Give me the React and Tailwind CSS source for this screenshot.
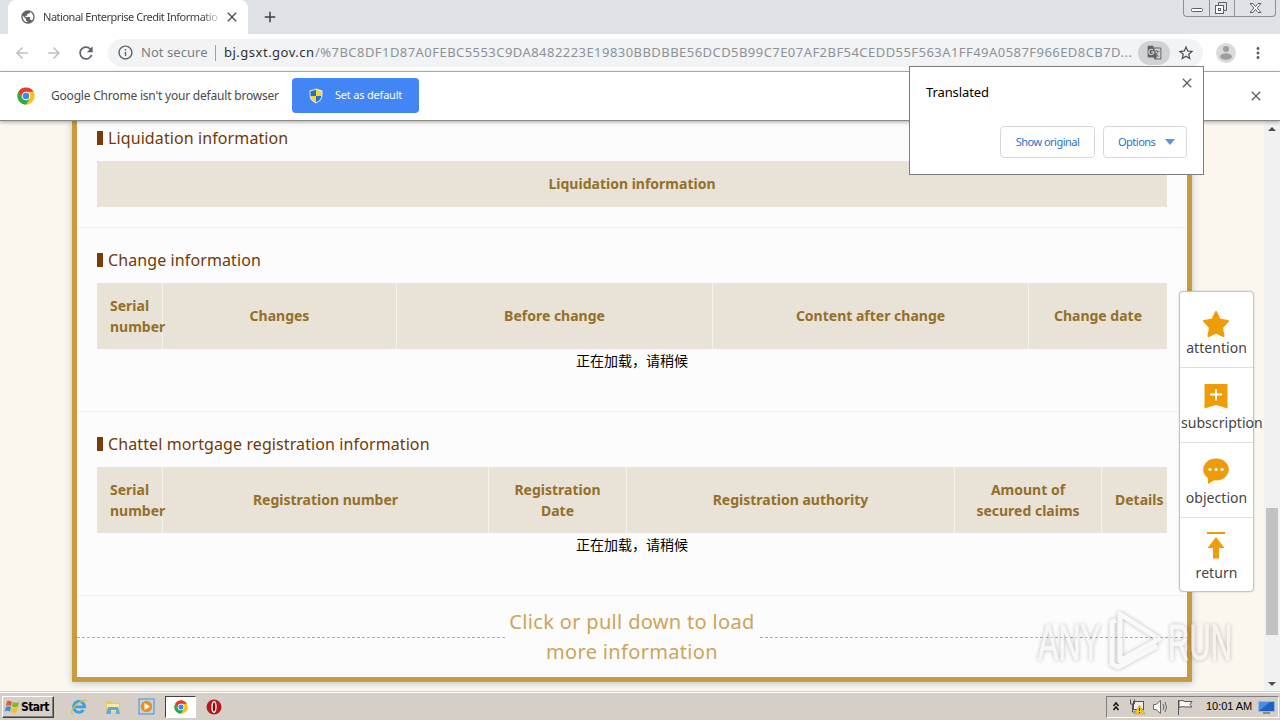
import React from 'react'
import { MdAdd, MdArrowBack, MdArrowForward, MdClose, MdGTranslate, MdInfoOutline, MdMoreVert, MdPublic, MdRefresh, MdStarBorder } from 'react-icons/md'

const changeColumns = [
    { label: 'Serial number', width: 'w-[66px]' },
    { label: 'Changes', width: 'w-[234px]' },
    { label: 'Before change', width: 'w-[316px]' },
    { label: 'Content after change', width: 'w-[316px]' },
    { label: 'Change date', width: 'w-[138px]' },
]

const mortgageColumns = [
    { label: 'Serial number', width: 'w-[66px]' },
    { label: 'Registration number', width: 'w-[326px]' },
    { label: 'Registration Date', width: 'w-[138px]' },
    { label: 'Registration authority', width: 'w-[328px]' },
    { label: 'Amount of secured claims', width: 'w-[147px]' },
    { label: 'Details', width: 'w-[65px]' },
]

const ChromeLogo = ({ className }) => (
    <svg viewBox="0 0 48 48" className={className}>
        <circle cx="24" cy="24" r="23" fill="#fbc116" />
        <path d="M24 12.5 H43.9 A23 23 0 0 0 4.1 12.5 L14 29.7 Z" fill="#e33b2e" />
        <path d="M4.1 12.5 A23 23 0 0 0 24 47 L34 29.7 L24 34 L14 29.7 Z" fill="#2da94f" />
        <circle cx="24" cy="24" r="11.5" fill="#fff" />
        <circle cx="24" cy="24" r="8.8" fill="#4285f4" />
    </svg>
)

const ShieldIcon = () => (
    <svg viewBox="0 0 16 16" className="w-4 h-4 shrink-0">
        <path d="M8 .5 L14.5 2.5 V7 Q14.5 12.5 8 15.5 Q1.5 12.5 1.5 7 V2.5 Z" fill="#dce9f7" />
        <path d="M8 1.7 V8 H2.5 V3.3 Z" fill="#2d6fc4" />
        <path d="M8 1.7 V8 H13.5 V3.3 Z" fill="#f9d432" />
        <path d="M8 8 H2.6 Q3 12 8 14.4 Z" fill="#f9d432" />
        <path d="M8 8 H13.4 Q13 12 8 14.4 Z" fill="#2d6fc4" />
    </svg>
)

const TabStrip = () => (
    <div className="relative flex h-[34px] bg-[#dee1e6] pl-2">
        <div className="flex items-center w-[240px] h-full bg-white rounded-t-lg pl-3">
            <MdPublic className="w-4 h-4 text-[#5f6368] shrink-0" />
            <span className="w-[177px] ml-[7px] overflow-hidden whitespace-nowrap text-[11px] tracking-[-0.48px] text-[#3c4043] [mask-image:linear-gradient(to_right,black_158px,transparent_180px)]">National Enterprise Credit Informatio</span>
            <MdClose className="w-4 h-4 ml-[4px] text-[#4b4e52] shrink-0" />
        </div>
        <MdAdd className="w-[18px] h-[18px] mt-2 ml-[13px] text-[#3c4043]" />
        <div className="absolute right-[4px] top-0 flex h-[17px] w-[93px] rounded-b border border-t-0 border-[#8d9096] text-[#5c6066]">
            <svg viewBox="0 0 91 16" className="w-[91px] h-4" fill="none" stroke="currentColor">
                <path d="M25.5 0 V16 M50.5 0 V16" stroke="#8d9096" />
                <rect x="7.5" y="8.5" width="11" height="3" rx="1" fill="#fff" />
                <path d="M34.5 2.5 H42.5 V10.5 H40 M34.5 2.5 V5" />
                <rect x="31.5" y="5.5" width="8" height="8" fill="#fff" />
                <rect x="34.5" y="8.5" width="2" height="2" />
                <path d="M66 3.5 h3 l2.5 3 l2.5 -3 h3 l-4 4.5 l4 4.5 h-3 l-2.5 -3 l-2.5 3 h-3 l4 -4.5 Z" fill="#fff" />
            </svg>
        </div>
    </div>
)

const Toolbar = () => (
    <div className="flex items-center h-[38px] bg-white border-b border-[#b6b4b6] pl-[13px]">
        <MdArrowBack className="w-[18px] h-[18px] text-[#bdbfc1]" />
        <MdArrowForward className="w-[18px] h-[18px] ml-[14px] text-[#bdbfc1]" />
        <MdRefresh className="w-[20px] h-[20px] ml-[13px] text-[#5f6368]" />
        <div className="flex items-center w-[1095px] h-7 ml-[12px] rounded-full bg-[#f1f3f4] pl-[9px] text-[13px] whitespace-nowrap">
            <MdInfoOutline className="w-[17px] h-[17px] text-[#5f6368]" />
            <span className="w-[67px] ml-[7px] text-[#7a7e83] tracking-[0.05px]">Not secure</span>
            <span className="w-px h-4 ml-[7px] bg-[#9aa0a6]" />
            <span className="w-[91px] ml-2 text-[#303134] tracking-[0.5px]">bj.gsxt.gov.cn</span>
            <span className="w-[819px] text-[#8d9297] tracking-[0.45px]">/%7BC8DF1D87A0FEBC5553C9DA8482223E19830BBDBBE56DCD5B99C7E07AF2BF54CEDD55F563A1FF49A0587F966ED8CB7D...</span>
            <span className="flex items-center justify-center w-8 h-6 ml-1 rounded-full bg-[#d0d2d4]">
                <MdGTranslate className="w-[15px] h-[15px] text-[#5f6368]" />
            </span>
            <MdStarBorder className="w-[18px] h-[18px] ml-[7px] text-[#4b4e52]" />
        </div>
        <svg viewBox="0 0 20 20" className="w-5 h-5 ml-[13px]">
            <circle cx="10" cy="10" r="10" fill="#dadada" />
            <circle cx="10" cy="6" r="3" fill="#9e9e9e" />
            <ellipse cx="10" cy="13.5" rx="6" ry="3.2" fill="#9e9e9e" />
        </svg>
        <MdMoreVert className="w-[18px] h-[18px] ml-[13px] text-[#5f6368]" />
    </div>
)

const DefaultBrowserBar = () => (
    <div className="relative z-10 flex items-center h-[49px] bg-white border-b border-[#8c8a88] pb-px pl-[17px] shadow-[0_1px_4px_rgba(0,0,0,0.35)]">
        <ChromeLogo className="w-[18px] h-[18px]" />
        <span className="w-[230px] ml-4 whitespace-nowrap text-[12px] text-[#4a4a4a] tracking-[-0.2px]">Google Chrome isn't your default browser</span>
        <button className="flex items-center w-[127px] h-[35px] ml-[11px] rounded bg-[#4285f4] pl-4 text-[11px] text-white whitespace-nowrap">
            <ShieldIcon />
            <span className="ml-[11px] tracking-[-0.2px]">Set as default</span>
        </button>
        <MdClose className="w-4 h-4 ml-auto mr-4 text-[#5f6368]" />
    </div>
)

const TranslateBubble = () => (
    <div className="absolute z-20 left-[909px] top-[66px] w-[295px] h-[109px] bg-white border border-[#7d7d7d] flex flex-col">
        <div className="flex justify-between pl-4 pr-2 pt-2">
            <span className="mt-[7px] text-[13px] leading-5 text-black tracking-[-0.1px]">Translated</span>
            <MdClose className="w-4 h-4 text-[#5f6368]" />
        </div>
        <div className="flex justify-end gap-2 mt-6 pr-4 text-[11px] text-[#2a6fd0] whitespace-nowrap">
            <button className="w-[95px] h-8 rounded border border-[#d6d8dc] tracking-[-0.5px]">Show original</button>
            <button className="flex items-center w-[84px] h-8 rounded border border-[#d6d8dc] pl-[14px] tracking-[-0.5px]">
                Options
                <svg viewBox="0 0 10 6" className="w-[10px] h-[6px] ml-auto mr-[11px]"><path d="M0 0 H10 L5 6 Z" fill="#5b94e3" /></svg>
            </button>
        </div>
    </div>
)

const SectionTitle = ({ children }) => (
    <div className="flex items-center h-6 mb-[11px] whitespace-nowrap">
        <span className="w-[6px] h-[14px] mr-[5px] bg-[#7a3c02]" />
        <h2 className="text-[16px] leading-6 text-[#6f3a06] tracking-[0.1px]">{children}</h2>
    </div>
)

const HeaderTable = ({ columns }) => (
    <div className="flex h-[66px] bg-[#e9e2d6]">
        {columns.map((col, i) => (
            <div key={i} className={`${col.width} flex flex-col justify-center shrink-0 px-[13px] pb-px border-r last:border-r-0 border-[#f6f2ea] text-center text-[14px] leading-[21px] font-bold text-[#93702a]`}>
                {col.label}
            </div>
        ))}
    </div>
)

const LoadingSection = ({ title, columns }) => (
    <section className="h-[184px] px-5 pt-5 border-b border-[#f0f0f0]">
        <SectionTitle>{title}</SectionTitle>
        <HeaderTable columns={columns} />
        <p className="h-6 text-center text-[14px] leading-[22px] text-black font-['Noto_Sans_CJK_SC',sans-serif]">正在加载，请稍候</p>
    </section>
)

const DashedLine = () => (
    <div className="flex-1 h-px mt-[30px] bg-[repeating-linear-gradient(to_right,#d6a659_0_3px,transparent_3px_5px)]" />
)

const SideItem = ({ label, children }) => (
    <div className="flex flex-col items-center h-[75px] pt-[17px] border-t border-[#dedede] first:border-t-0 first:pt-[18px]">
        <svg viewBox="0 0 28 28" className="w-7 h-7 mr-px overflow-visible" fill="#f09c08">{children}</svg>
        <span className="max-w-[71px] text-[14px] leading-[20px] text-[#444] tracking-[0.05px]">{label}</span>
    </div>
)

const SideMenu = () => (
    <div className="absolute z-10 left-[1179px] top-[291px] w-[75px] h-[301px] bg-white rounded-sm border border-[#c4c4c4] shadow-[0_0_2px_rgba(0,0,0,0.2)]">
        <SideItem label="attention">
            <path d="M14 2 L17.5 9.5 L26 11 L20 17.5 L21.5 26 L14 22.5 L6.5 26 L8 17.5 L2 11 L10.500 9.5 Z" stroke="#f09c08" strokeWidth="2" strokeLinejoin="round" />
        </SideItem>
        <SideItem label="subscription">
            <path d="M2.5 -1 H25.5 V23.5 L14 20 L2.5 23.5 Z" />
            <path d="M14 4 V15.5 M8 9.500 H20" stroke="#fff" strokeWidth="2" />
        </SideItem>
        <SideItem label="objection">
            <ellipse cx="14" cy="9.5" rx="12.8" ry="11" />
            <path d="M6 16 L6 24 L14 19 Z" />
            <circle cx="8" cy="9.5" r="1.6" fill="#fff" />
            <circle cx="14" cy="9.5" r="1.6" fill="#fff" />
            <circle cx="20" cy="9.5" r="1.6" fill="#fff" />
        </SideItem>
        <SideItem label="return">
            <path d="M5 -3 H23 V-1 H5 Z M14 2 L22.5 13 H17 V23.5 H11 V13 H5.5 Z" />
        </SideItem>
    </div>
)

const Watermark = () => (
    <svg viewBox="0 0 240 66" className="absolute z-20 left-[1035px] top-[608px] w-[240px] h-[66px] drop-shadow-[0_0_2px_rgba(0,0,0,0.45)] opacity-55">
        <g fill="#f4f4f4" fontFamily="'Liberation Sans Narrow', 'Liberation Sans', sans-serif" fontSize="50" stroke="#f4f4f4">
            <text x="3" y="52" textLength="63" lengthAdjust="spacingAndGlyphs">ANY</text>
            <text x="133" y="52" textLength="64" lengthAdjust="spacingAndGlyphs">RUN</text>
        </g>
        <g fill="none" stroke="#f8f8f8" strokeWidth="5" strokeLinejoin="round">
            <path d="M85 6 L124 31 L85 53 Z" />
            <path d="M81 12 L77 14 V56 L83 59 L122 38" />
        </g>
    </svg>
)

const Scrollbar = () => (
    <div className="flex flex-col items-center w-4 h-full bg-[#f1f1f1] py-[6px]">
        <svg viewBox="0 0 8 4" className="w-2 h-1"><path d="M0 4 L4 0 L8 4 Z" fill="#505050" /></svg>
        <div className="w-3 h-[127px] mt-[377px] bg-[#c1c1c1]" />
        <svg viewBox="0 0 8 4" className="w-2 h-1 mt-auto"><path d="M0 0 H8 L4 4 Z" fill="#505050" /></svg>
    </div>
)

const Taskbar = () => (
    <div className="relative flex items-center h-7 bg-[#d5cfc7] border-t border-white shadow-[0_-1px_0_#d5cfc7] pl-[2px]">
        <button className="flex items-center w-[52px] h-[22px] border border-t-white border-l-white border-r-[#404040] border-b-[#404040] shadow-[inset_-1px_-1px_0_#808080] pl-px">
            <svg viewBox="0 0 16 16" className="w-4 h-4 shrink-0">
                <path d="M3 2 Q5 1 8 3 L7 7 Q4 5.5 2 7 Z" fill="#e8572a" />
                <path d="M9 3 Q12 4.5 15 3 L14 7.5 Q11 9 8 7.5 Z" fill="#7cb82f" />
                <path d="M2 8 Q4 6.5 7 8 L6 12.5 Q3 11 0.5 12.5 Z" fill="#3a8fdd" />
                <path d="M8 8.5 Q11 10 14 8.5 L12.5 13 Q10 14.5 7 13 Z" fill="#f8c020" />
            </svg>
            <span className="ml-px font-['DejaVu_Sans_Condensed','DejaVu_Sans',sans-serif] font-bold text-[12px] leading-4 tracking-[-0.6px] text-black">Start</span>
        </button>
        <svg viewBox="0 0 18 18" className="w-[18px] h-[18px] ml-[16px]" fill="none">
            <path d="M13.5 12 A5.5 5.5 0 1 1 14.5 8.8 H5" stroke="#36a2e2" strokeWidth="2.8" />
            <path d="M3.5 15.5 C0 17 1 12 6 7 C11 2.5 17 0 16.5 4" stroke="#e5bd3a" strokeWidth="1.3" />
        </svg>
        <svg viewBox="0 0 18 18" className="w-[18px] h-[18px] ml-[16px]">
            <path d="M2 3 H8 L9 5 H16 V13 H2 Z" fill="#e9c864" />
            <path d="M3 6 H15 V13 H3 Z" fill="#f8e9a6" />
            <path d="M4 9 H14 L16 16 H12 V12 H7 V16 H2 Z" fill="#62a9d5" />
        </svg>
        <svg viewBox="0 0 18 18" className="w-[18px] h-[18px] ml-[16px]">
            <rect x="1" y="1" width="15" height="15" fill="#b8d8f2" stroke="#4d8dc9" />
            <circle cx="8.5" cy="8.5" r="5.7" fill="#f28c16" />
            <path d="M6.5 5 L12 8.5 L6.5 12 Z" fill="#fff" />
        </svg>
        <div className="flex items-center justify-center w-[31px] h-[22px] ml-[9px] bg-white border border-t-[#404040] border-l-[#404040] border-r-white border-b-white">
            <ChromeLogo className="w-[14px] h-[14px]" />
        </div>
        <svg viewBox="0 0 16 16" className="w-4 h-4 ml-[10px]">
            <circle cx="8" cy="8" r="7.5" fill="#b3191d" />
            <ellipse cx="8" cy="8" rx="2" ry="5.3" fill="#8a0a0e" stroke="#fff" strokeWidth="1.3" />
        </svg>
        <div className="flex items-center w-[173px] h-[22px] ml-auto mr-px border border-t-[#808080] border-l-[#808080] border-r-white border-b-white pl-[5px]">
            <svg viewBox="0 0 8 12" className="w-2 h-3" fill="none" stroke="#111" strokeWidth="1.5"><path d="M1.5 5 L4 2 L6.5 5 M1.5 9 L4 6 L6.5 9" /></svg>
            <svg viewBox="0 0 18 18" className="w-[18px] h-[18px] ml-[8px]">
                <rect x="5.5" y="3.5" width="10" height="8" fill="#eee" stroke="#555" />
                <path d="M2.5 1.5 V6 H6.5 V1.5 M4.5 6 V14 H8" fill="none" stroke="#555" />
                <path d="M11.5 7 L17 16 H6 Z" fill="#f6c915" stroke="#c28d0a" strokeWidth=".5" />
                <path d="M11.5 10 V13 M11.5 14 V15" stroke="#222" />
            </svg>
            <svg viewBox="0 0 18 18" className="w-[18px] h-[18px] ml-[6px]" fill="#f7f7f7" stroke="#6b6b6b">
                <path d="M1.5 6.5 H4 L8.5 2.5 V15.5 L4 11.5 H1.5 Z" />
                <path d="M11 6 Q13 9 11 12 M13 4 Q16 9 13 14" fill="none" />
            </svg>
            <svg viewBox="0 0 18 18" className="w-[18px] h-[18px] ml-[6px]" fill="#f7f7f7" stroke="#555">
                <path d="M2.5 2 V17 M3 3 Q6 1.5 9 3.5 H16 L14 6.5 L16 9 H10 Q6 8 3 9.5 Z" />
            </svg>
            <span className="w-[46px] ml-[12px] whitespace-nowrap font-['Liberation_Sans',sans-serif] text-[11px] tracking-[-0.05px] text-black">10:01 AM</span>
            <svg viewBox="0 0 18 14" className="w-[18px] h-[14px] ml-[6px]">
                <rect x=".5" y="1.5" width="16" height="10" fill="#1f62c4" stroke="#8fb8e8" />
                <path d="M1 11 L12 2 H1 Z" fill="#4a8ce0" />
                <path d="M5 13 H12" stroke="#444" />
            </svg>
        </div>
    </div>
)

const App = () => {
    return (
        <div className="relative flex flex-col w-[1280px] h-[720px] overflow-hidden bg-white font-['Noto_Sans','Noto_Sans_CJK_SC',sans-serif]">
            <TabStrip />
            <Toolbar />
            <DefaultBrowserBar />

            {/* Page content */}
            <div className="flex flex-1 min-h-0 bg-[#fbf7ee]">
                <div className="flex-1 pl-[72px]">
                    <main className="w-[1120px] h-[561px] bg-[#fcfcfc] border-[5px] border-t-0 border-[#c89b3c] shadow-[0_1px_7px_#b5c0c6]">
                        <section className="h-[107px] px-5 pt-[5px] border-b border-[#f0f0f0]">
                            <SectionTitle>Liquidation information</SectionTitle>
                            <div className="h-[46px] bg-[#e9e2d6] text-center text-[14px] leading-[46px] font-bold text-[#93702a]">Liquidation information</div>
                        </section>
                        <LoadingSection title="Change information" columns={changeColumns} />
                        <LoadingSection title="Chattel mortgage registration information" columns={mortgageColumns} />
                        <div className="flex pt-[11px] text-[#cda45a]">
                            <DashedLine />
                            <p className="w-[255px] text-center text-[20px] leading-[30px] tracking-[0.33px]">Click or pull down to load more information</p>
                            <DashedLine />
                        </div>
                    </main>
                </div>
                <Scrollbar />
            </div>

            <Taskbar />
            <TranslateBubble />
            <SideMenu />
            <Watermark />
        </div>
    )
}

export default App
